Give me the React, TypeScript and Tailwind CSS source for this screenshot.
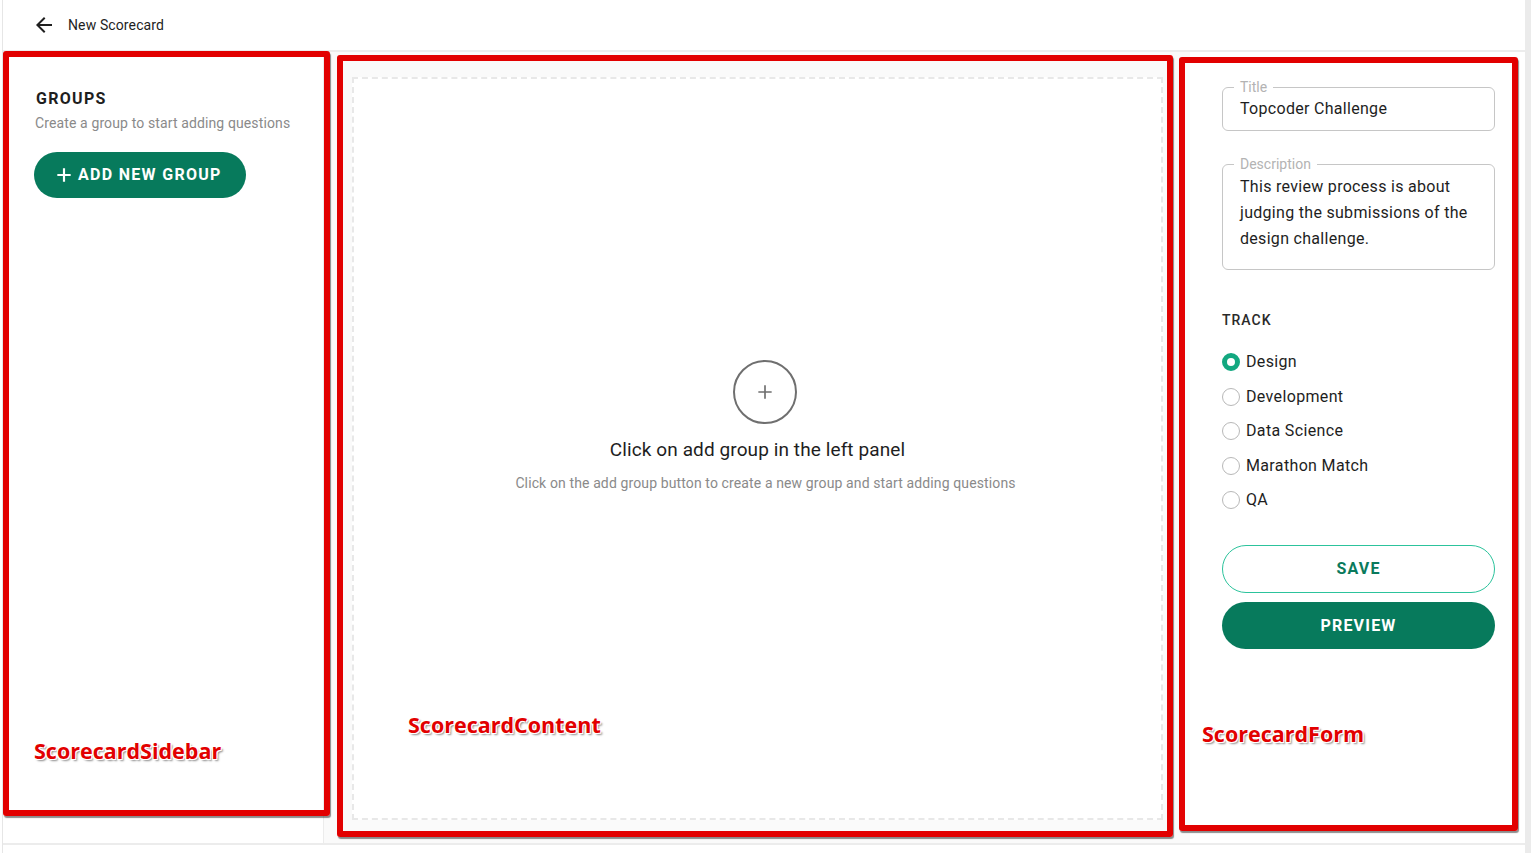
import React from "react";

const tracks = ["Design", "Development", "Data Science", "Marathon Match", "QA"];

function ArrowBack() {
  return (
    <svg width="24" height="24" viewBox="0 0 24 24" fill="#1f1f1f">
      <path d="M20 11H7.83l5.59-5.59L12 4l-8 8 8 8 1.41-1.41L7.83 13H20v-2z" />
    </svg>
  );
}

function Plus({ size, color, stroke }: { size: number; color: string; stroke: number }) {
  return (
    <svg width={size} height={size} viewBox="0 0 24 24" fill="none" stroke={color} strokeWidth={stroke} strokeLinecap="butt">
      <path d="M12 4v16M4 12h16" />
    </svg>
  );
}

function Sidebar() {
  return (
    <div className="w-[321px] shrink-0 border-r border-[#ececec] bg-white pl-[33px] pt-[37px]">
      <div className="text-[16px] leading-[20px] font-bold tracking-[1.3px] text-[#1e1e1e]">GROUPS</div>
      <div className="mt-[4px] -ml-[1px] text-[14px] leading-[20px] tracking-[0.12px] text-[#8a8a8a]">
        Create a group to start adding questions
      </div>
      <button className="mt-[19px] -ml-[2px] flex h-[46px] w-[212px] items-center gap-[4px] rounded-full bg-[#077a5c] pl-[20px] text-[16px] font-bold tracking-[1.3px] text-white">
        <Plus size={20} color="#ffffff" stroke={2.6} />
        <span>ADD NEW GROUP</span>
      </button>
    </div>
  );
}

function Content() {
  return (
    <div className="flex-1 bg-[#fafafa] pt-[25px] pb-[23px] pl-[28px] pr-[27px]">
      <div className="flex h-full flex-col items-center justify-center border-2 border-dashed border-[#e8e8e8] bg-white pb-[44px]">
        <div className="ml-[14px] flex h-[64px] w-[64px] items-center justify-center rounded-full border-2 border-[#6f6f6f]">
          <Plus size={20} color="#6f6f6f" stroke={2} />
        </div>
        <div className="mt-[14px] text-[19px] leading-[24px] tracking-[0.1px] text-[#1e1e1e]">
          Click on add group in the left panel
        </div>
        <div className="mt-[11px] ml-[16px] text-[14px] leading-[20px] tracking-[0.12px] text-[#8a8a8a]">
          Click on the add group button to create a new group and start adding questions
        </div>
      </div>
    </div>
  );
}

function Form() {
  return (
    <div className="w-[335px] shrink-0 bg-white pl-[32px] pr-[30px] pt-[27px]">
      <fieldset className="rounded-[6px] border border-[#c6c6c6] px-[17px] pt-[2px] pb-[9px]">
        <legend className="-ml-[6px] px-[6px] text-[14px] leading-[16px] text-[#b3b3b3]">Title</legend>
        <div className="text-[16px] leading-[24px] tracking-[0.3px] text-[#1e1e1e]">Topcoder Challenge</div>
      </fieldset>
      <fieldset className="mt-[25px] rounded-[6px] border border-[#c6c6c6] px-[17px] pt-[2px] pb-[17px]">
        <legend className="-ml-[6px] px-[6px] text-[14px] leading-[16px] text-[#b3b3b3]">Description</legend>
        <div className="text-[16px] leading-[26px] tracking-[0.3px] text-[#1e1e1e]">
          This review process is about judging the submissions of the design challenge.
        </div>
      </fieldset>
      <div className="mt-[42px] text-[14px] leading-[16px] font-medium tracking-[1px] text-[#2a2a2a]">TRACK</div>
      <div className="mt-[22px] flex flex-col gap-[10.5px]">
        {tracks.map((t, i) => (
          <div key={t} className="flex h-[24px] items-center gap-[6px]">
            {i === 0 ? (
              <div className="h-[18px] w-[18px] rounded-full border-[5px] border-[#13a880] bg-white" />
            ) : (
              <div className="h-[18px] w-[18px] rounded-full border-[1.5px] border-[#b8b8b8] bg-white" />
            )}
            <span className="text-[16px] leading-[24px] tracking-[0.35px] text-[#1e1e1e]">{t}</span>
          </div>
        ))}
      </div>
      <button className="mt-[33px] flex h-[48px] w-[273px] items-center justify-center rounded-full border border-[#2cc39c] bg-white text-[16px] font-bold tracking-[1.2px] text-[#0a7a5c]">
        SAVE
      </button>
      <button className="mt-[9px] flex h-[47px] w-[273px] items-center justify-center rounded-full bg-[#077a5c] text-[16px] font-bold tracking-[1.2px] text-white">
        PREVIEW
      </button>
    </div>
  );
}

const labelCls =
  "absolute font-['Open_Sans',sans-serif] text-[21.5px] leading-[28px] font-bold text-[#e20000] [text-shadow:-1px_-1px_0_#fff,1px_-1px_0_#fff,-1px_1px_0_#fff,1px_1px_0_#fff,2px_2px_2px_rgba(0,0,0,0.45)]";
const boxCls =
  "absolute rounded-[3px] border-[6px] border-[#e20000] shadow-[1px_2px_1px_rgba(0,0,0,0.45)] pointer-events-none";

export default function App() {
  return (
    <div className="relative h-[853px] w-[1531px] overflow-hidden bg-white font-['Roboto',sans-serif]">
      <div className="flex h-full pl-[2px]">
        <div className="flex h-full flex-1 flex-col border-l border-[#e6e6e6]">
          <div className="flex h-[52px] shrink-0 items-center border-b-2 border-[#ececec] pl-[29px]">
            <ArrowBack />
            <span className="ml-[12px] text-[14px] tracking-[0.12px] text-[#1e1e1e]">New Scorecard</span>
          </div>
          <div className="flex h-[793px] shrink-0 border-b-2 border-[#ececec]">
            <Sidebar />
            <Content />
            <Form />
          </div>
          <div className="flex-1" />
        </div>
        <div className="h-full w-[6px] shrink-0 bg-[#ebebeb]" />
      </div>

      {/* annotation overlays */}
      <div className={`${boxCls} left-[3px] top-[51px] h-[765px] w-[327px]`} />
      <div className={`${boxCls} left-[337px] top-[55px] h-[782px] w-[836px]`} />
      <div className={`${boxCls} left-[1179px] top-[57px] h-[774px] w-[339px]`} />
      <div className={`${labelCls} left-[34px] top-[737px]`}>ScorecardSidebar</div>
      <div className={`${labelCls} left-[408px] top-[711px]`}>ScorecardContent</div>
      <div className={`${labelCls} left-[1202px] top-[720px]`}>ScorecardForm</div>
    </div>
  );
}
